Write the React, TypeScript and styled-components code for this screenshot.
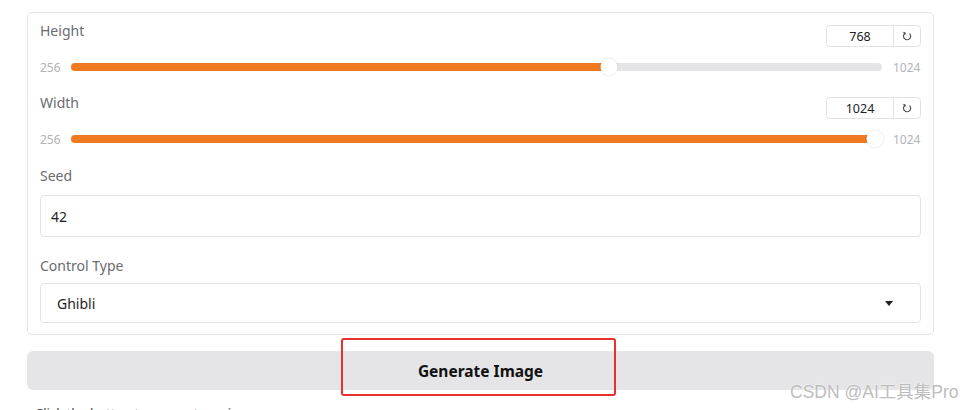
import styled, { createGlobalStyle } from 'styled-components';

const GlobalStyle = createGlobalStyle`
	html, body {
		margin: 0;
		padding: 0;
		background: #ffffff;
		font-family: "Noto Sans", "Open Sans", sans-serif;
		overflow: hidden;
	}
`

const Page = styled.div`
	position: relative;
	width: 965px;
	height: 410px;
	padding: 12px 31px 0 27px;
	box-sizing: border-box;
`

const Panel = styled.div`
	border: 1px solid #e4e4e7;
	border-radius: 5px;
	padding: 12px 12px 11px 12px;
	display: flex;
	flex-direction: column;
`

const SliderBlock = styled.div<{ $gap: number }>`
	display: flex;
	flex-direction: column;
	margin-bottom: ${p => p.$gap}px;
`

const HeaderRow = styled.div`
	display: flex;
	justify-content: space-between;
	align-items: flex-start;
	height: 22px;
`

const Label = styled.span`
	font-size: 14px;
	color: #6b6b70;
	line-height: 20px;
`

const HeaderLabel = styled(Label)`
	margin-top: -4px;
`

const NumberBox = styled.div`
	display: flex;
	height: 22px;
	border: 1px solid #e2e2e5;
	border-radius: 4px;
	box-sizing: border-box;
	overflow: hidden;
`

const NumberValue = styled.div`
	width: 66px;
	display: flex;
	align-items: center;
	justify-content: center;
	font-size: 12.5px;
	color: #222;
	border-right: 1px solid #e2e2e5;
`

const ResetButton = styled.div`
	width: 26px;
	display: flex;
	align-items: center;
	justify-content: center;
	color: #555;
`

const SliderRow = styled.div`
	display: flex;
	align-items: center;
	height: 20px;
	margin-top: 10px;
	gap: 11px;
`

const RangeLabel = styled.span`
	font-size: 12px;
	color: #b3b3b8;
	width: 20px;
	&:last-child {
		width: 28px;
	}
`

const Track = styled.div`
	position: relative;
	flex: 1;
	height: 8px;
	border-radius: 4px;
	background: #e5e5e7;
`

const Fill = styled.div`
	height: 100%;
	border-radius: 4px;
	background: #f07a21;
`

const Thumb = styled.div`
	position: absolute;
	top: 50%;
	width: 17px;
	height: 17px;
	border-radius: 50%;
	background: #fff;
	box-shadow: 0 0 2px rgba(0, 0, 0, 0.18);
	transform: translate(-50%, -50%);
`

const FieldLabel = styled(Label)<{ $below: number }>`
	display: block;
	margin-bottom: ${p => p.$below}px;
`

const TextBox = styled.div<{ $h: number; $pad: number }>`
	height: ${p => p.$h}px;
	border: 1px solid #e4e4e7;
	border-radius: 4px;
	box-sizing: border-box;
	display: flex;
	align-items: center;
	justify-content: space-between;
	padding: 0 27px 0 ${p => p.$pad}px;
	font-size: 14px;
	color: #1e1e1e;
`

const Caret = styled.span`
	width: 0;
	height: 0;
	border-left: 4.5px solid transparent;
	border-right: 4.5px solid transparent;
	border-top: 5px solid #222;
`

const GenerateButton = styled.button`
	margin-top: 16px;
	width: 100%;
	height: 39px;
	border: none;
	border-radius: 6px;
	background: #e5e5e7;
	font-family: "Noto Sans", "Open Sans", sans-serif;
	font-weight: 700;
	font-size: 15.5px;
	color: #111;
`

const Highlight = styled.div`
	position: absolute;
	left: 341px;
	top: 338px;
	width: 275px;
	height: 58px;
	box-sizing: border-box;
	border: 2px solid #e8312f;
	border-radius: 3px;
	pointer-events: none;
`

const Watermark = styled.div`
	position: absolute;
	left: 790px;
	top: 381px;
	font-family: "Liberation Sans", "Noto Sans CJK SC", sans-serif;
	font-size: 17.5px;
	line-height: 22px;
	color: #bdbdbd;
	text-shadow: 0 0 2px #fff;
	white-space: nowrap;
`

const Hint = styled.p`
	margin: 14px 0 0 8px;
	font-size: 13px;
	line-height: 18px;
	color: #444;
`

function ResetIcon() {
	return (
		<svg width="10" height="10" viewBox="0 0 10 10" fill="none" stroke="#555" strokeWidth="1.2">
			<path d="M3 2.2 A3.6 3.6 0 1 0 7.6 2.6" />
			<path d="M1.4 1.4 L3.2 2.2 L2.6 4" />
		</svg>
	);
}

type SliderProps = {
	label: string,
	value: number,
	min: number,
	max: number,
	gap: number,
}

function SliderField({ label, value, min, max, gap }: SliderProps) {
	const ratio = (value - min) / (max - min);
	return (
		<SliderBlock $gap={gap}>
			<HeaderRow>
				<HeaderLabel>{label}</HeaderLabel>
				<NumberBox>
					<NumberValue>{value}</NumberValue>
					<ResetButton><ResetIcon /></ResetButton>
				</NumberBox>
			</HeaderRow>
			<SliderRow>
				<RangeLabel>{min}</RangeLabel>
				<Track>
					<Fill style={{ width: `${ratio * 100}%` }} />
					<Thumb style={{ left: `calc(7px + (100% - 14px) * ${ratio})` }} />
				</Track>
				<RangeLabel>{max}</RangeLabel>
			</SliderRow>
		</SliderBlock>
	);
}

export default function App() {
	return (
		<Page>
			<GlobalStyle />
			<Panel>
				<SliderField label="Height" value={768} min={256} max={1024} gap={20} />
				<SliderField label="Width" value={1024} min={256} max={1024} gap={17} />
				<FieldLabel $below={9}>Seed</FieldLabel>
				<TextBox $h={42} $pad={10}>42</TextBox>
				<FieldLabel $below={7} style={{ marginTop: 19 }}>Control Type</FieldLabel>
				<TextBox $h={40} $pad={16}>
					Ghibli
					<Caret />
				</TextBox>
			</Panel>
			<GenerateButton>Generate Image</GenerateButton>
			<Hint>Click the button to generate an image</Hint>
			<Highlight />
			<Watermark>CSDN @AI工具集Pro</Watermark>
		</Page>
	);
}
